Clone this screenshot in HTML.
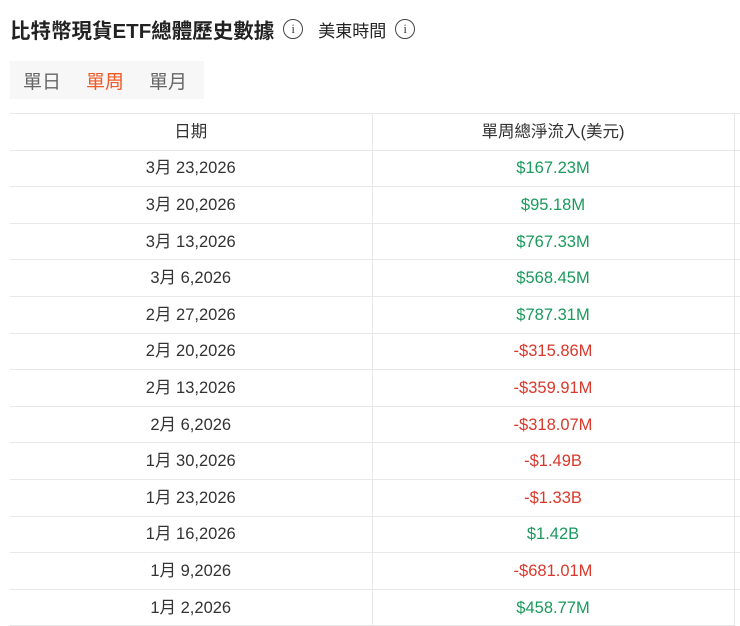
<!DOCTYPE html><html><head><meta charset="utf-8"><style>
body{margin:0;width:740px;height:626px;background:#fff;font-family:"Liberation Sans","Noto Sans CJK TC",sans-serif;color:#333;overflow:hidden;position:relative}
.t{position:absolute;left:10px;top:16px;height:26px;font-size:20.5px;font-weight:bold;color:#222;white-space:nowrap;display:flex;align-items:center}
.i{display:inline-block;width:20px;height:20px;border:1.7px solid #444;border-radius:50%;box-sizing:border-box;font-size:13px;line-height:17px;text-align:center;font-weight:normal;font-family:"Liberation Serif",serif;color:#444}
.tabs{position:absolute;left:10px;top:61px;width:194px;height:38px;background:#f7f7f7;display:flex;align-items:center;font-size:19px;color:#666}
.tabs span{margin-left:13px;margin-right:12px}
table{position:absolute;left:10px;top:113px;border-collapse:collapse;width:740px;table-layout:fixed}
td{height:36.6px;padding:0;border-top:1.5px solid #e8e8e8;border-right:1.5px solid #e8e8e8;text-align:center;font-size:16.5px;line-height:20px;vertical-align:middle;box-sizing:border-box}
td:first-child{width:362px}td:nth-child(2){width:362px}
.g{color:#1a9a5c}.r{color:#d9382c}
</style></head><body>
<div class="t">比特幣現貨ETF總體歷史數據<span class="i" style="margin-left:9px">i</span><span style="font-size:17px;font-weight:normal;margin-left:15px">美東時間</span><span class="i" style="margin-left:9px">i</span></div>
<div class="tabs"><span>單日</span><span style="color:#f05a28">單周</span><span>單月</span></div>
<table>
<tr><td>日期</td><td>單周總淨流入(美元)</td><td></td></tr>
<tr><td>3月 23,2026</td><td class="g">$167.23M</td><td></td></tr>
<tr><td>3月 20,2026</td><td class="g">$95.18M</td><td></td></tr>
<tr><td>3月 13,2026</td><td class="g">$767.33M</td><td></td></tr>
<tr><td>3月 6,2026</td><td class="g">$568.45M</td><td></td></tr>
<tr><td>2月 27,2026</td><td class="g">$787.31M</td><td></td></tr>
<tr><td>2月 20,2026</td><td class="r">-$315.86M</td><td></td></tr>
<tr><td>2月 13,2026</td><td class="r">-$359.91M</td><td></td></tr>
<tr><td>2月 6,2026</td><td class="r">-$318.07M</td><td></td></tr>
<tr><td>1月 30,2026</td><td class="r">-$1.49B</td><td></td></tr>
<tr><td>1月 23,2026</td><td class="r">-$1.33B</td><td></td></tr>
<tr><td>1月 16,2026</td><td class="g">$1.42B</td><td></td></tr>
<tr><td>1月 9,2026</td><td class="r">-$681.01M</td><td></td></tr>
<tr><td style="border-bottom:1.5px solid #e8e8e8">1月 2,2026</td><td class="g" style="border-bottom:1.5px solid #e8e8e8">$458.77M</td><td></td></tr>
</table>
</body></html>
